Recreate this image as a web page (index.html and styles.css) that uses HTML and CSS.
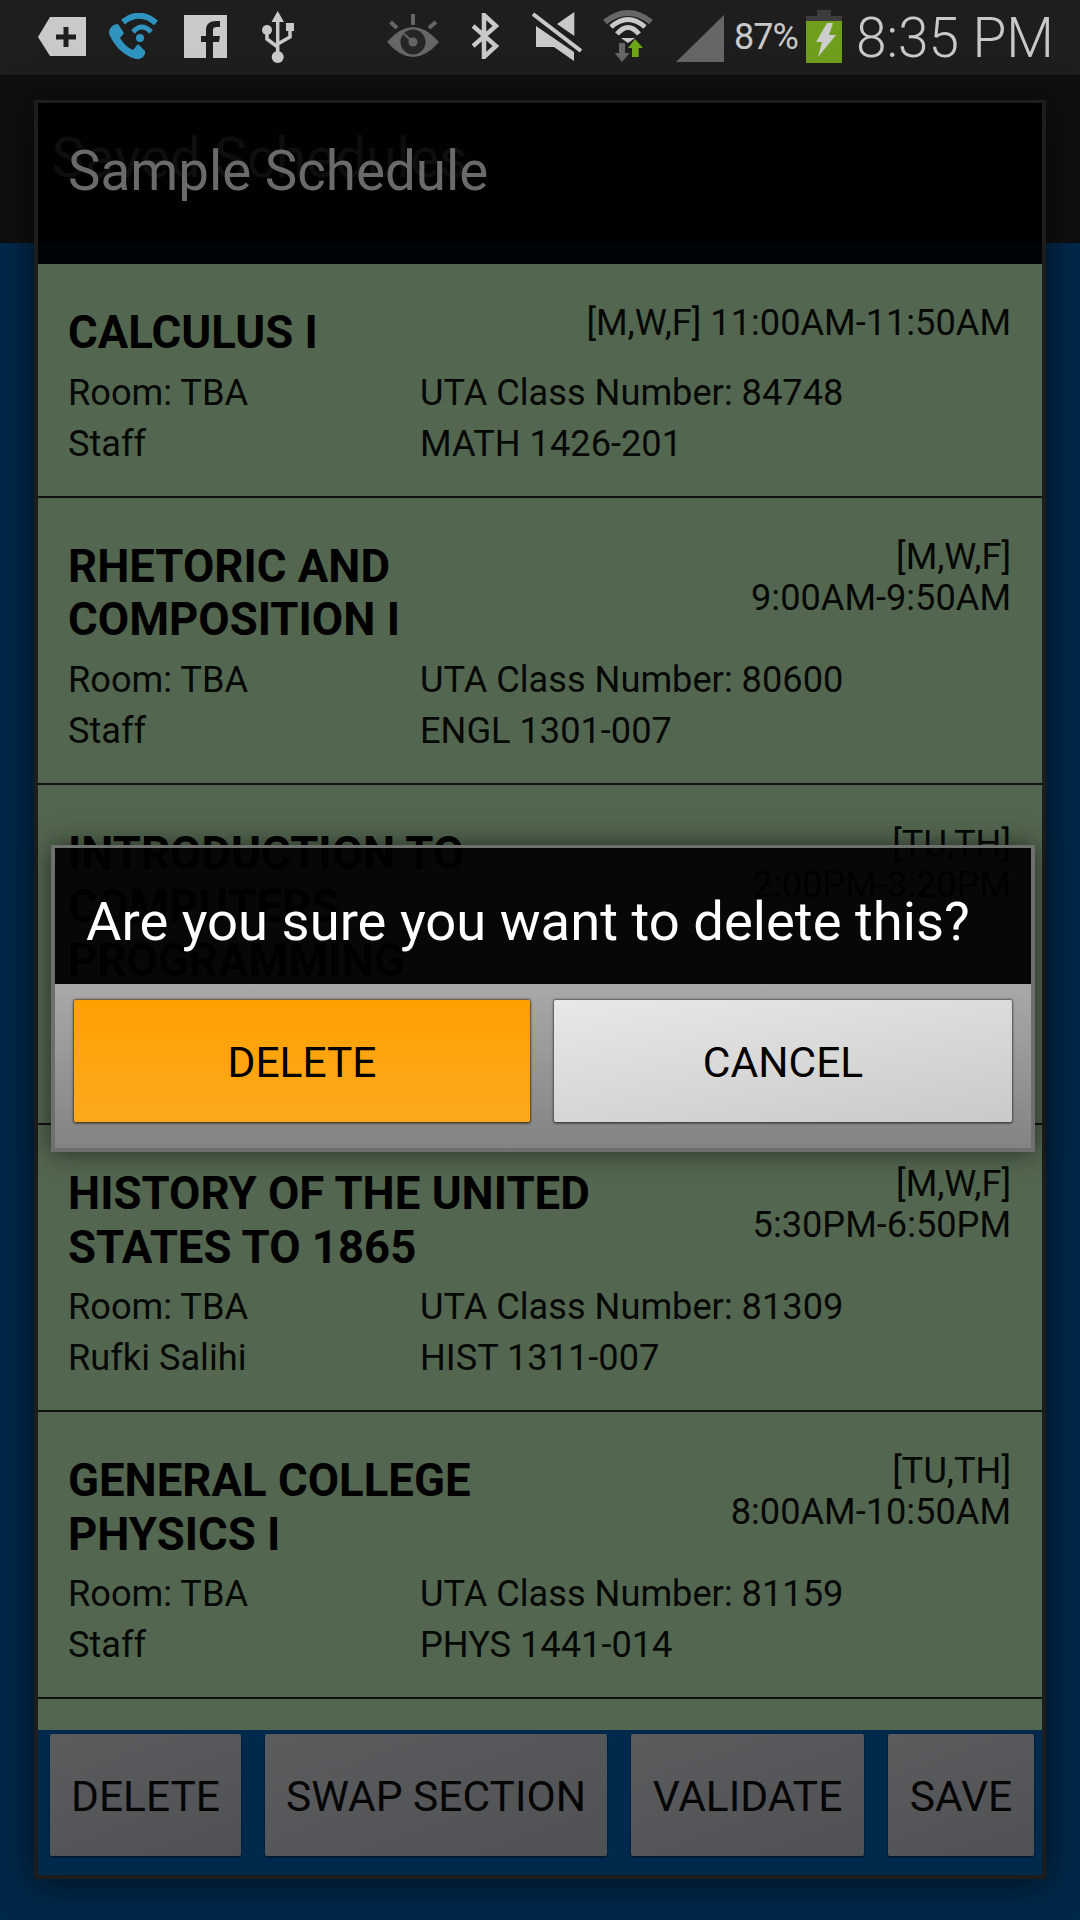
FILE: index.html
```html
<!DOCTYPE html>
<html lang="en">
<head>
    <meta charset="UTF-8">
    <title>Sample Schedule</title>
    <link rel="stylesheet" href="styles.css">
</head>
<body>
    <div class="screen">
        <div class="statusbar">
            <svg class="ic ic-tag" viewBox="0 0 48 39"><path fill="#c9c9c9" d="M0 20L12 0H48V39H12Z"/><path fill="#1e1e1e" d="M25.500 10h5v7.500H38v5h-7.500V30h-5v-7.500H18v-5h7.500Z"/></svg>
            <svg class="ic ic-call" viewBox="0 0 49 47"><path fill="#2f94bf" d="M9 11L15 20L11 25C14 30 19 35 24 37L29 31L36 38C37 42 33 47 27 46C14 43 3 30 0 20C0 15 4 11 9 11Z"/><g fill="none" stroke="#2f94bf"><path stroke-width="6" d="M14 9Q31 -4 47 10"/><path stroke-width="5" d="M24 19Q33 9 42 19"/></g><circle fill="#2f94bf" cx="31" cy="25" r="4"/></svg>
            <svg class="ic ic-fb" viewBox="0 0 43 43"><path fill="#c9c9c9" d="M0 0H43V43H0Z"/><path fill="#1e1e1e" d="M22 43V27H17V21H22V15C22 9 26 6 32 6H36V12H33C30 12 29 13 29 15V21H36L35 27H29V43Z"/></svg>
            <svg class="ic ic-usb" viewBox="0 0 32 52"><g fill="#c9c9c9"><path d="M15.700 0L22 11H9.500Z"/><circle cx="15.700" cy="46" r="6"/><circle cx="5" cy="19" r="5"/><path d="M24 12H32V20H24Z"/></g><g fill="none" stroke="#c9c9c9" stroke-width="3.500"><path d="M15.700 10V42"/><path d="M5 22V28L15.700 36"/><path d="M28 20V26L15.700 33"/></g></svg>
            <svg class="ic ic-eye" viewBox="0 0 52 43"><path fill="#666" d="M0 28Q26 -2 52 28Q26 58 0 28Z"/><circle fill="#262626" cx="26" cy="28" r="12.500"/><circle fill="#666" cx="26" cy="28" r="4.500"/><g stroke="#666" fill="none"><path stroke-width="2" d="M26 28L17 20"/><path stroke-width="4" d="M26 0V11M3.500 8L10 14M49 8L42 14"/></g></svg>
            <svg class="ic ic-bt" viewBox="0 0 27 46"><path fill="none" stroke="#c9c9c9" stroke-width="4.500" d="M1 13L24 33L12 44V2L24 13L1 33"/></svg>
            <svg class="ic ic-mute" viewBox="0 0 50 49"><g fill="#c9c9c9"><path d="M25 12L42.300 0V24Z"/><path d="M4 14L42 40V49L22 35H4Z"/></g><path stroke="#c9c9c9" stroke-width="4" d="M1 2L49 39"/></svg>
            <svg class="ic ic-wifi" viewBox="0 0 52 53"><g fill="none"><path stroke="#666" stroke-width="6" d="M3 13Q26 -5 49 13"/><path stroke="#c9c9c9" stroke-width="5" d="M9 18Q26 3 43 18"/><path stroke="#c9c9c9" stroke-width="5" d="M15 25Q26 12 37 25"/></g><path fill="#c9c9c9" d="M19 29H33L26 34Z"/><path fill="#666" d="M17 34H23V44H27.700L20 53L12.700 44H17Z"/><path fill="#6fa51a" d="M33 30L41 39H36.700V48H30V39H26Z"/></svg>
            <svg class="ic ic-signal" viewBox="0 0 48 47"><path fill="#666" d="M48 0V47H0Z"/></svg>
            <span class="battery-text">87%</span>
            <svg class="ic ic-battery" viewBox="0 0 36 53"><path fill="#3c3c3c" d="M11 0H25V6H36V11H0V6H11Z"/><path fill="#6f9e1c" d="M0 11H36V53H0Z"/><path fill="#cdcdcd" d="M21 13L10 32H16L12 47L30 25H23L27 13Z"/></svg>
            <span class="clock">8:35 PM</span>
        </div>

        <div class="actionbar">Saved Schedules</div>
        <div class="page"></div>

        <div class="frame">
            <div class="frame-title">Sample Schedule</div>

            <div class="course-list">
                <div class="course">
                    <div class="course-head">
                        <div class="course-name">CALCULUS I</div>
                        <div class="course-time">[M,W,F] 11:00AM-11:50AM</div>
                    </div>
                    <div class="course-info">
                        <div>Room: TBA</div>
                        <div>UTA Class Number: 84748</div>
                        <div>Staff</div>
                        <div>MATH 1426-201</div>
                    </div>
                </div>
                <div class="course">
                    <div class="course-head">
                        <div class="course-name">RHETORIC AND<br>COMPOSITION I</div>
                        <div class="course-time">[M,W,F]<br>9:00AM-9:50AM</div>
                    </div>
                    <div class="course-info">
                        <div>Room: TBA</div>
                        <div>UTA Class Number: 80600</div>
                        <div>Staff</div>
                        <div>ENGL 1301-007</div>
                    </div>
                </div>
                <div class="course">
                    <div class="course-head">
                        <div class="course-name">INTRODUCTION TO<br>COMPUTERS<br>PROGRAMMING</div>
                        <div class="course-time">[TU,TH]<br>2:00PM-3:20PM</div>
                    </div>
                    <div class="course-info"></div>
                </div>
                <div class="course">
                    <div class="course-head">
                        <div class="course-name">HISTORY OF THE UNITED<br>STATES TO 1865</div>
                        <div class="course-time">[M,W,F]<br>5:30PM-6:50PM</div>
                    </div>
                    <div class="course-info">
                        <div>Room: TBA</div>
                        <div>UTA Class Number: 81309</div>
                        <div>Rufki Salihi</div>
                        <div>HIST 1311-007</div>
                    </div>
                </div>
                <div class="course">
                    <div class="course-head">
                        <div class="course-name">GENERAL COLLEGE<br>PHYSICS I</div>
                        <div class="course-time">[TU,TH]<br>8:00AM-10:50AM</div>
                    </div>
                    <div class="course-info">
                        <div>Room: TBA</div>
                        <div>UTA Class Number: 81159</div>
                        <div>Staff</div>
                        <div>PHYS 1441-014</div>
                    </div>
                </div>
            </div>

            <div class="frame-buttons">
                <div class="dark-btn">DELETE</div>
                <div class="dark-btn">SWAP SECTION</div>
                <div class="dark-btn">VALIDATE</div>
                <div class="dark-btn">SAVE</div>
            </div>
        </div>

        <div class="confirm">
            <div class="confirm-text">Are you sure you want to delete this?</div>
            <div class="confirm-buttons">
                <div class="btn btn-orange">DELETE</div>
                <div class="btn btn-grey">CANCEL</div>
            </div>
        </div>
    </div>
</body>
</html>
```

FILE: styles.css
```css
body {
    margin: 0;
    font-family: Roboto, sans-serif;
    background: #00284a;
}
.screen {
    position: relative;
    width: 1080px;
    height: 1920px;
    display: flex;
    flex-direction: column;
    overflow: hidden;
}

/* status bar */
.statusbar {
    height: 75px;
    flex: none;
    display: flex;
    align-items: flex-start;
    background: #1e1e1e;
    color: #c9c9c9;
}
.ic {
    flex: none;
    display: block;
}
.ic-tag { width: 48px; height: 39px; margin: 17px 0 0 38px; }
.ic-call { width: 49px; height: 47px; margin: 13px 0 0 23px; }
.ic-fb { width: 43px; height: 43px; margin: 15px 0 0 26px; }
.ic-usb { width: 32px; height: 52px; margin: 11px 0 0 35px; }
.ic-eye { width: 52px; height: 43px; margin: 14px 0 0 93px; }
.ic-bt { width: 27px; height: 46px; margin: 13px 0 0 33px; }
.ic-mute { width: 50px; height: 49px; margin: 12px 0 0 33px; }
.ic-wifi { width: 52px; height: 53px; margin: 9px 0 0 20px; }
.ic-signal { width: 48px; height: 47px; margin: 15px 0 0 22px; }
.ic-battery { width: 36px; height: 53px; margin: 10px 0 0 8px; }
.battery-text {
    width: 64px;
    margin: 16px 0 0 10px;
    font-size: 36px;
    line-height: 42px;
    letter-spacing: -1px;
    white-space: nowrap;
}
.clock {
    margin: 5px 0 0 14px;
    font-size: 55px;
    line-height: 66px;
    font-weight: 300;
    white-space: nowrap;
}

/* what is behind the dialog */
.actionbar {
    height: 168px;
    flex: none;
    box-sizing: border-box;
    padding: 51px 0 0 52px;
    background: #0f0f0f;
    color: #8a8a8a;
    font-size: 55px;
    line-height: 64px;
}
.page {
    flex: 1;
    background: #00284a;
}

/* schedule dialog */
.frame {
    position: absolute;
    left: 34px;
    top: 100px;
    width: 1004px;
    height: 1772px;
    display: flex;
    flex-direction: column;
    border: 4px solid #1d1d1d;
    border-top-width: 3px;
    box-shadow: 0 4px 36px rgba(0,0,0,0.6);
}
.frame-title {
    height: 161px;
    flex: none;
    box-sizing: border-box;
    padding: 36px 0 0 30px;
    background: rgba(0,0,0,0.9);
    color: #6a6a6a;
    font-size: 54.7px;
    line-height: 64px;
}
.course-list {
    flex: 1;
    overflow: hidden;
    background: #53664f;
    color: #060806;
}
.course {
    padding: 42px 31px 27px 30px;
    border-bottom: 2px solid #111;
    font-size: 36.2px;
}
.course-head {
    display: flex;
    justify-content: space-between;
}
.course-name {
    color: #000;
    font-size: 45.5px;
    line-height: 53.5px;
    font-weight: 700;
}
.course-time {
    margin-top: -4px;
    line-height: 41px;
    text-align: right;
}
.course-info {
    display: grid;
    grid-template-columns: 352px 1fr;
    min-height: 102px;
    margin-top: 7px;
    line-height: 51px;
}
.frame-buttons {
    flex: none;
    display: grid;
    grid-template-columns: 191px 342px 233px 146px;
    gap: 24px;
    height: 122px;
    padding: 4px 8px 19px 12px;
    background: #00294c;
}
.dark-btn {
    display: flex;
    align-items: center;
    justify-content: center;
    padding-top: 2px;
    background: linear-gradient(160deg, #5b5c5e, #505154);
    box-shadow: 0 1px 2px rgba(0,0,0,0.6);
    border-radius: 2px;
    color: #050505;
    font-size: 42.5px;
}

/* confirmation on top */
.confirm {
    position: absolute;
    left: 51px;
    top: 845px;
    width: 976px;
    border: 4px solid #6d706c;
    border-top-width: 3px;
    box-shadow: 0 0 24px rgba(0,0,0,0.55);
}
.confirm-text {
    height: 136px;
    box-sizing: border-box;
    padding: 44px 0 0 31px;
    background: rgba(0,0,0,0.92);
    color: #fff;
    font-size: 54.4px;
    line-height: 60px;
}
.confirm-buttons {
    display: grid;
    grid-template-columns: 456px 458px;
    gap: 24px;
    height: 122px;
    padding: 16px 19px 26px 19px;
    background: linear-gradient(#a9a9a9, #838383);
}
.btn {
    display: flex;
    align-items: center;
    justify-content: center;
    padding-top: 2px;
    border-radius: 2px;
    color: #000;
    font-size: 42.5px;
}
.btn-orange {
    background: linear-gradient(#ffa000, #fca81e);
    box-shadow: 0 0 2px 1px rgba(60,40,0,0.7), 0 2px 2px rgba(0,0,0,0.3);
}
.btn-grey {
    background: linear-gradient(170deg, #e8e8e8, #c9c9c9);
    box-shadow: 0 0 2px 1px rgba(40,40,40,0.6), 0 2px 2px rgba(0,0,0,0.3);
}
```
